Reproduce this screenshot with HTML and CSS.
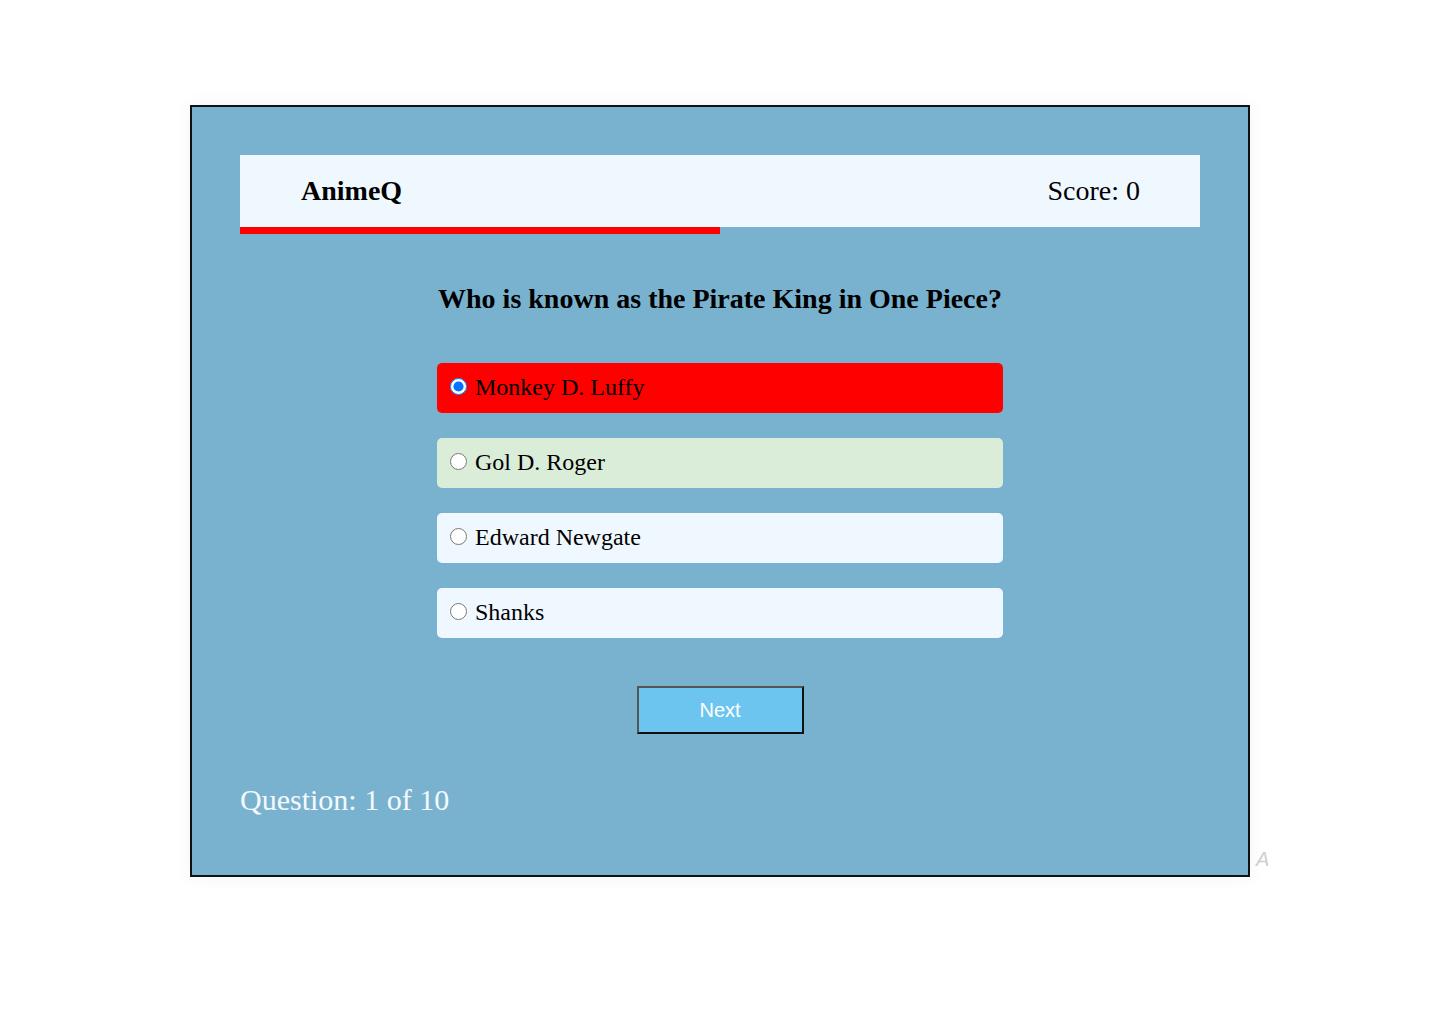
FILE: index.html
```html
<!DOCTYPE html>
<html lang="en">
<head>
<meta charset="utf-8">
<title>AnimeQ</title>
<link rel="stylesheet" href="styles.css">
</head>
<body>
<div class="page">
  <main class="quiz">
    <header class="topbar">
      <div class="brand">AnimeQ</div>
      <div class="score">Score: 0</div>
    </header>
    <div class="progress"><div class="progress-fill" style="width:50%"></div></div>
    <h2 class="question">Who is known as the Pirate King in One Piece?</h2>
    <div class="options">
      <label class="option option-wrong"><input type="radio" name="a" checked><span>Monkey D. Luffy</span></label>
      <label class="option option-right"><input type="radio" name="a"><span>Gol D. Roger</span></label>
      <label class="option"><input type="radio" name="a"><span>Edward Newgate</span></label>
      <label class="option"><input type="radio" name="a"><span>Shanks</span></label>
    </div>
    <div class="actions"><button class="next" type="button">Next</button></div>
    <div class="counter">Question: 1 of 10</div>
  </main>
  <span class="stray">A</span>
</div>
</body>
</html>
```
FILE: styles.css
```css
html, body {
  margin: 0;
  padding: 0;
  background: #ffffff;
}
body {
  font-family: "Liberation Serif", "Times New Roman", serif;
  color: #000;
}
.page {
  position: relative;
  padding-top: 105px;
  height: 919px;
}
.quiz {
  box-sizing: border-box;
  width: 1060px;
  margin: 0 auto;
  background: #79b2cf;
  border: 2px solid #111;
  padding: 48px 48px 59px;
  box-shadow: 0 0 18px rgba(0, 0, 0, 0.05);
}
.topbar {
  height: 72px;
  background: #f0f8ff;
  display: flex;
  align-items: center;
  justify-content: space-between;
  padding: 0 60px 0 61px;
  font-size: 28px;
}
.brand {
  font-weight: bold;
}
.progress {
  height: 7px;
}
.progress-fill {
  height: 100%;
  background: #ff0000;
}
.question {
  margin: 49px 0 0;
  text-align: center;
  font-size: 28px;
  font-weight: bold;
  line-height: 31px;
}
.options {
  margin: 49px auto 0;
  width: 566px;
  display: flex;
  flex-direction: column;
  gap: 25px;
}
.option {
  box-sizing: border-box;
  height: 50px;
  padding-bottom: 2px;
  border-radius: 5px;
  background: #f0f8ff;
  display: flex;
  align-items: center;
  font-size: 24px;
  cursor: pointer;
}
.option input {
  width: 17px;
  height: 17px;
  margin: 0 8px 2px 13px;
}
.option-wrong {
  background: #ff0000;
}
.option-right {
  background: #daedd9;
}
.actions {
  margin-top: 48px;
  display: flex;
  justify-content: center;
}
.next {
  box-sizing: border-box;
  width: 167px;
  height: 48px;
  background: #6cc5ef;
  color: #fff;
  font-family: "Liberation Sans", Arial, sans-serif;
  font-size: 20px;
  border: 2px solid;
  border-color: #555 #111 #111 #555;
  padding: 0;
}
.counter {
  margin-top: 49px;
  font-size: 30px;
  line-height: 33px;
  color: #f4f9fc;
}
.stray {
  position: absolute;
  left: 1256px;
  top: 848px;
  font-family: "Liberation Sans", Arial, sans-serif;
  font-style: italic;
  font-size: 20px;
  color: #cfcfcf;
}
```
